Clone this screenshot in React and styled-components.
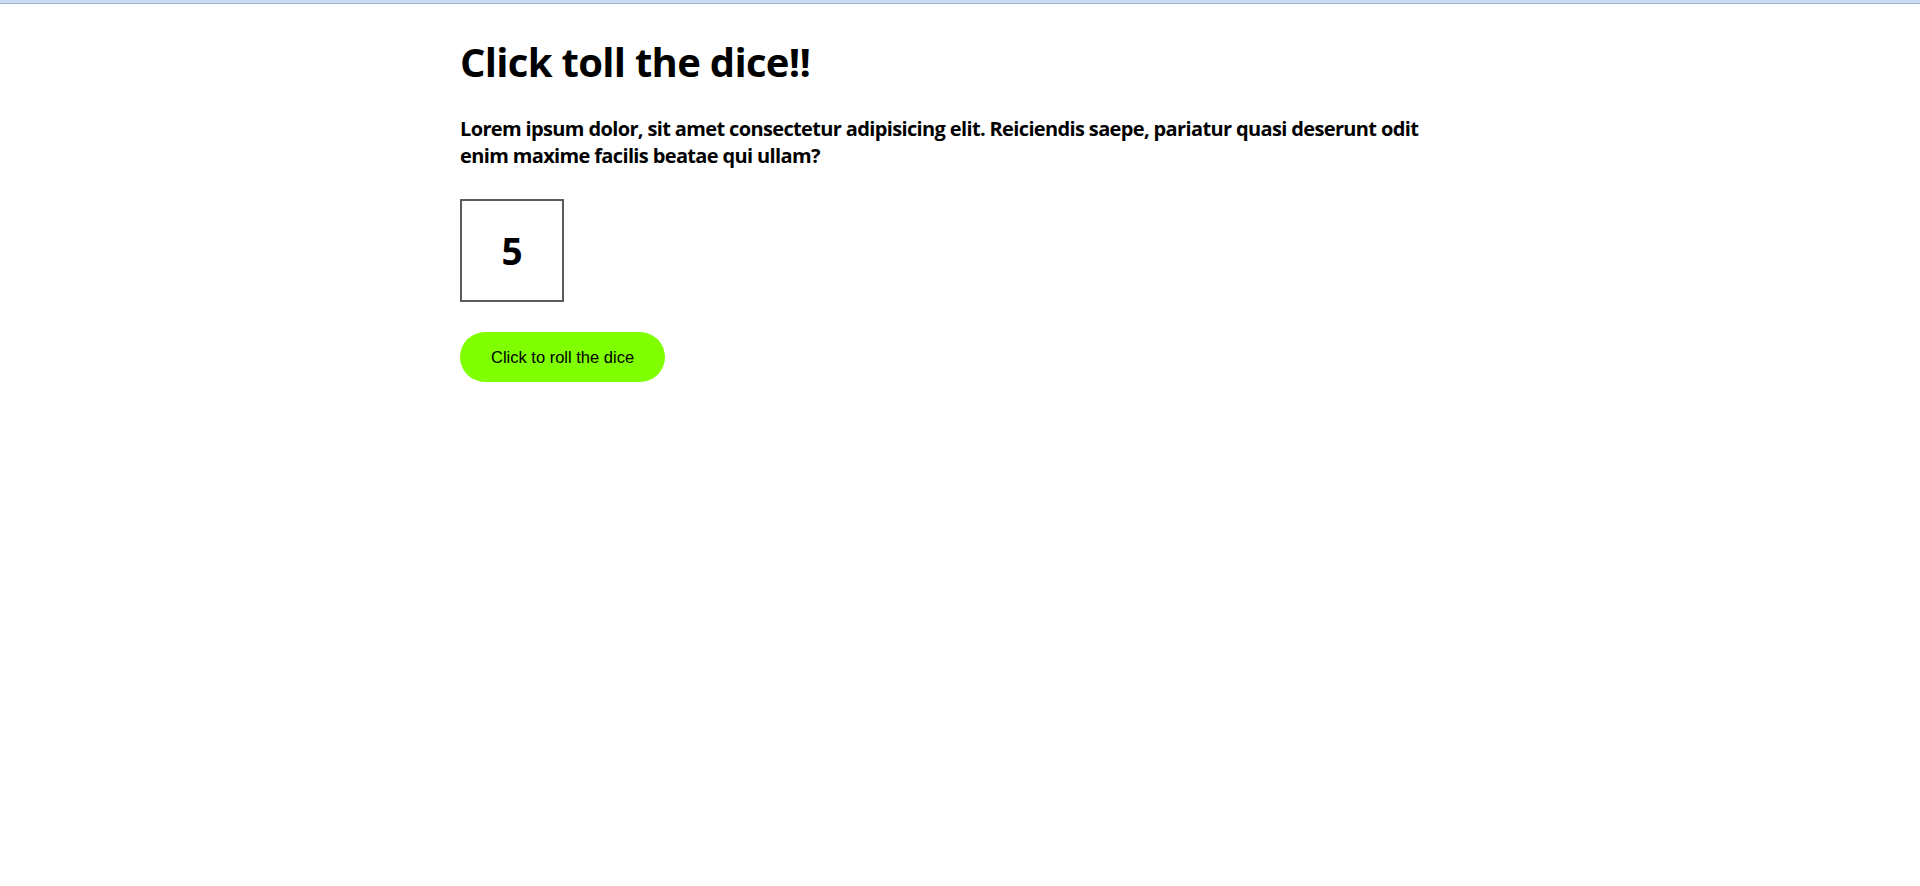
import { useState } from "react";
import styled, { createGlobalStyle } from "styled-components";

const GlobalStyle = createGlobalStyle`
    * {
        box-sizing: border-box;
    }

    body {
        margin: 0;
        background: #ffffff;
        color: #000000;
        font-family: "Open Sans", "Noto Sans", sans-serif;
    }
`;

const App = () => {
    const [value, setValue] = useState(5);

    const rollDice = () => {
        setValue(Math.floor(Math.random() * 6) + 1);
    };

    return (
        <>
            <GlobalStyle />
            <TopBar />
            <Page>
                <Title>Click toll the dice!!</Title>
                <Lead>
                    Lorem ipsum dolor, sit amet consectetur adipisicing elit.
                    Reiciendis saepe, pariatur quasi deserunt odit enim maxime
                    facilis beatae qui ullam?
                </Lead>
                <Dice>{value}</Dice>
                <RollButton onClick={rollDice}>Click to roll the dice</RollButton>
            </Page>
        </>
    );
};

const TopBar = styled.div`
    height: 4px;
    background: #c9dbf5;
    border-bottom: 1px solid #9fb0c6;
`;

const Page = styled.main`
    max-width: 1000px;
    margin: 0 auto;
    padding-top: 34px;
    display: flex;
    flex-direction: column;
    align-items: flex-start;
    row-gap: 30px;
`;

const Title = styled.h1`
    margin: 0;
    font-size: 40px;
    font-weight: 700;
    line-height: 48px;
    letter-spacing: -0.7px;
`;

const Lead = styled.p`
    margin: 0;
    font-size: 20px;
    font-weight: 700;
    line-height: 26.6px;
    letter-spacing: -0.64px;
`;

const Dice = styled.div`
    width: 104px;
    height: 103px;
    display: flex;
    align-items: center;
    justify-content: center;
    border: 2px solid #5b5b5b;
    font-size: 37px;
    font-weight: 700;
`;

const RollButton = styled.button`
    height: 50px;
    padding: 0 31px;
    border: none;
    border-radius: 25px;
    background: #7fff00;
    color: #000000;
    font-family: "Liberation Sans", Arial, sans-serif;
    font-size: 16.5px;
    cursor: pointer;
`;

export default App;
